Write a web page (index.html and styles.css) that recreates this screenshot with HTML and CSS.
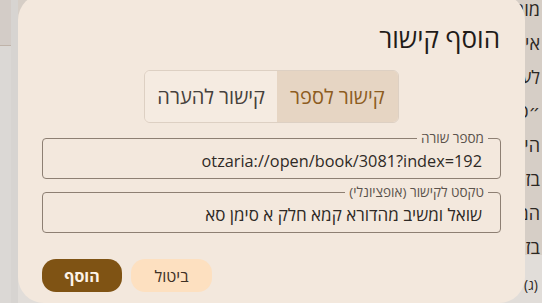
FILE: index.html
```html
<!DOCTYPE html>
<html lang="he">

<head>
    <meta charset="UTF-8">

    <link rel="stylesheet" href="styles.css">
</head>

<body>

    <div class="page">
        <aside class="sidebar">
            <div class="sidebar-head"></div>
        </aside>
        <div class="gutter"></div>
        <main class="reader" dir="rtl">
            <div class="reader-text">
                <p>מותר לאכול</p>
                <p>איסור הנאה</p>
                <p>לענין דינא</p>
                <p>״כ משום</p>
                <p>היינו דוקא</p>
                <p>בזמן הזה</p>
                <p>המחבר כתב</p>
                <p>בזמנינו</p>
            </div>
            <div class="reader-notes">
                <p>(ג) שם</p>
                <p>ולכן</p>
            </div>
        </main>
    </div>

    <div class="dialog" dir="rtl">
        <h1 class="dialog-title">הוסף קישור</h1>

        <div class="toggle">
            <button class="toggle-item selected">קישור לספר</button>
            <button class="toggle-item">קישור להערה</button>
        </div>

        <div class="field">
            <span class="field-label">מספר שורה</span>
            <div class="field-value latin" dir="ltr">otzaria://open/book/3081?index=192</div>
        </div>

        <div class="field">
            <span class="field-label">טקסט לקישור (אופציונלי)</span>
            <div class="field-value">שואל ומשיב מהדורא קמא חלק א סימן סא</div>
        </div>

        <div class="actions">
            <button class="btn btn-cancel">ביטול</button>
            <button class="btn btn-add">הוסף</button>
        </div>
    </div>

</body>

</html>
```

FILE: styles.css
```css
html,
body {
    margin: 0;
    width: 542px;
    height: 303px;
    overflow: hidden;
    font-family: "Open Sans", "Noto Sans", "DejaVu Sans", sans-serif;
}

.page {
    display: flex;
    height: 303px;
}

.sidebar {
    width: 11px;
    background-color: #dbd8d5;
}

.sidebar-head {
    height: 45px;
    background-color: #d3ccc7;
    border-bottom: 1px solid #bfb3a9;
}

.gutter {
    width: 7px;
    background-color: #d7d4d1;
}

.reader {
    flex: 1;
    display: flex;
    flex-direction: column;
    overflow: hidden;
}

.reader-text {
    height: 255px;
    background-color: #d6cec6;
    padding-right: 2px;
    color: #2c2824;
    font-size: 18px;
    overflow: hidden;
}

.reader-text p,
.reader-notes p {
    margin: 0;
    line-height: 34px;
    white-space: nowrap;
}

.reader-text p:first-child {
    margin-top: -8px;
}

.reader-notes {
    flex: 1;
    background-color: #e1ddd9;
    padding-right: 4px;
    color: #2c2824;
    font-size: 14px;
    padding-top: 18px;
    overflow: hidden;
}

.reader-notes p {
    line-height: 24px;
}

.dialog {
    position: absolute;
    left: 18px;
    top: -6px;
    width: 507px;
    height: 309px;
    box-sizing: border-box;
    padding: 28px 24px 0 24px;
    background-color: #f3e8dd;
    border-radius: 26px;
    display: flex;
    flex-direction: column;
}

.dialog-title {
    margin: 0;
    font-size: 26px;
    font-weight: normal;
    line-height: 32px;
    color: #1f1b18;
    padding-right: 1px;
}

.toggle {
    align-self: center;
    display: flex;
    margin-top: 16px;
    height: 51px;
    border: 1px solid #ddd0c3;
    border-radius: 6px;
    overflow: hidden;
}

.toggle-item {
    font-family: inherit;
    font-size: 20px;
    border: none;
    margin: 0;
    padding: 0 12px;
    white-space: nowrap;
    background-color: #f5ebe1;
    color: #45403b;
}

.toggle-item.selected {
    padding: 0 13px;
    background-color: #e6d5c3;
    color: #8d5c1e;
}

.field {
    position: relative;
    height: 41px;
    box-sizing: border-box;
    border: 1px solid #8d7f73;
    border-radius: 4px;
    margin-top: 15px;
    display: flex;
    align-items: center;
}

.field + .field {
    margin-top: 13px;
}

.field-label {
    position: absolute;
    top: -10px;
    right: 12px;
    padding: 0 4px;
    background-color: #f3e8dd;
    font-size: 13.5px;
    line-height: 18px;
    color: #5b534c;
    white-space: nowrap;
}

.field-value {
    width: 100%;
    box-sizing: border-box;
    padding: 4px 18px 0 18px;
    text-align: right;
    font-size: 17px;
    color: #2f2a26;
    white-space: nowrap;
}

.field-value.latin {
    font-size: 16.3px;
}

.actions {
    display: flex;
    justify-content: flex-end;
    gap: 9px;
    margin-top: 26px;
}

.btn {
    font-family: inherit;
    height: 33px;
    width: 81px;
    border: none;
    border-radius: 14px;
    font-size: 16px;
}

.btn-cancel {
    background-color: #fde0c0;
    color: #3f3125;
}

.btn-add {
    width: 80px;
    background-color: #7f5314;
    color: #fdf3e8;
    font-weight: bold;
}
```
